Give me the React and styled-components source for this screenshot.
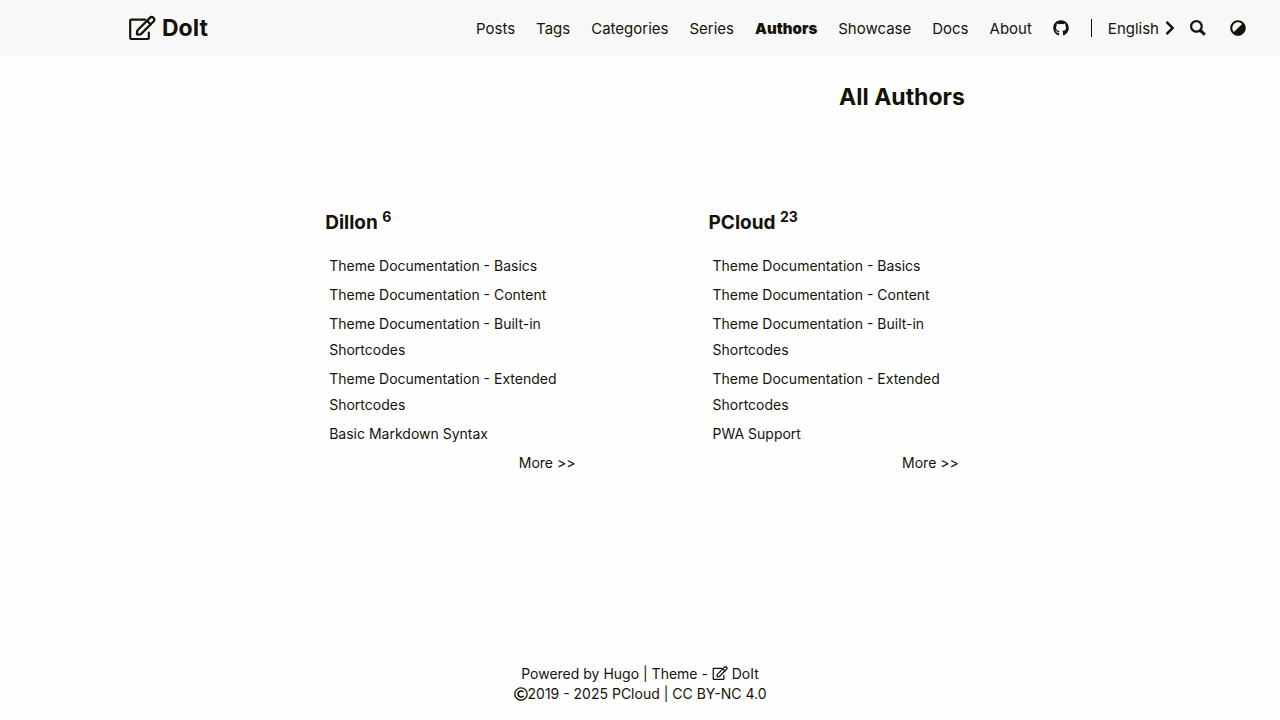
import React from "react";
import styled, { createGlobalStyle } from "styled-components";
import { FaGithub, FaChevronRight, FaAdjust, FaRegCopyright } from "react-icons/fa";

const GlobalStyle = createGlobalStyle`
  * { box-sizing: border-box; }
  body {
    margin: 0;
    background: #fefefe;
    color: #161209;
    font-family: Inter, "Liberation Sans", sans-serif;
    font-size: 15px;
  }
  a { color: inherit; text-decoration: none; }
`;

const Page = styled.div`
  display: flex;
  flex-direction: column;
  min-height: 100vh;
`;

const Header = styled.header`
  display: flex;
  align-items: center;
  justify-content: space-between;
  height: 56px;
  padding: 0 34px 0 10vw;
  background: #f8f8f8;
`;

const Brand = styled.a`
  display: flex;
  align-items: center;
  gap: 6px;
  font-size: 23px;
  font-weight: 700;
`;

const Menu = styled.nav`
  display: flex;
  align-items: center;
`;

const MenuItem = styled.a`
  display: flex;
  margin-right: 21px;
  font-weight: ${(p) => (p.$active ? 900 : 400)};
`;

const IconLink = styled.a`
  display: flex;
  margin-right: 22px;
  font-size: 16px;
`;

const Divider = styled.span`
  width: 1px;
  height: 18px;
  margin-right: 16px;
  background: #161209;
`;

const IconButton = styled.button`
  display: flex;
  align-items: center;
  gap: 3px;
  padding: 0;
  margin-left: ${(p) => p.$gap || 0}px;
  border: 0;
  background: none;
  color: inherit;
  font: inherit;
  cursor: pointer;
`;

const ThemeIcon = styled(FaAdjust)`
  transform: rotate(225deg);
`;

const Main = styled.main`
  flex: 1;
  width: 52%;
  margin: 0 auto;
  padding-top: 24px;
`;

const Title = styled.h1`
  margin: 0 8px 93px;
  font-size: 23px;
  line-height: 34px;
  text-align: right;
`;

const Columns = styled.div`
  display: grid;
  grid-template-columns: 39.5% 39.5%;
  justify-content: space-between;
  padding: 0 14px 0 18px;
`;

const Name = styled.h2`
  margin: 0 0 14px;
  font-size: 19px;
  line-height: 32px;
  sup {
    font-size: 14px;
    line-height: 0;
  }
`;

const List = styled.ul`
  list-style: none;
  margin: 0;
  padding: 0 0 0 4px;
  font-size: 14px;
  line-height: 26px;
`;

const Item = styled.li`
  margin-bottom: 3px;
  text-align: ${(p) => (p.$more ? "right" : "left")};
`;

const Footer = styled.footer`
  padding-bottom: 16px;
  font-size: 14px;
  line-height: 20px;
  text-align: center;
  svg { vertical-align: -2px; }
`;

const EditIcon = ({ size }) => (
  <svg width={size} height={size} viewBox="0 0 28 28" fill="none" stroke="currentColor" strokeWidth="2.2" strokeLinecap="round" strokeLinejoin="round" aria-hidden="true">
    <path d="M17 5.7H3.2a1 1 0 0 0-1 1V24a1 1 0 0 0 1 1H19.8a1 1 0 0 0 1-1V18.5" />
    <path d="M21.9 3.9a2.5 2.5 0 0 1 3.6 3.6L13.4 19.6Q12.8 20.2 12 20.3L9.8 20.6Q8.8 20.6 8.9 19.6L9.1 17.4Q9.2 16.6 9.8 16Z" />
    <path d="M19 6.8l3.6 3.6" />
  </svg>
);

const SearchIcon = () => (
  <svg width="16" height="16" viewBox="0 0 16 16" fill="none" stroke="currentColor" aria-hidden="true">
    <circle cx="6.4" cy="6.4" r="5.3" strokeWidth="2.2" />
    <path d="M10.4 10.4L14.8 14.8" strokeWidth="3" />
  </svg>
);

const menu = ["Posts", "Tags", "Categories", "Series", "Authors", "Showcase", "Docs", "About"];

const shared = [
  "Theme Documentation - Basics",
  "Theme Documentation - Content",
  "Theme Documentation - Built-in Shortcodes",
  "Theme Documentation - Extended Shortcodes",
];

const authors = [
  { name: "Dillon", count: 6, posts: [...shared, "Basic Markdown Syntax"] },
  { name: "PCloud", count: 23, posts: [...shared, "PWA Support"] },
];

export default function App() {
  return (
    <Page>
      <GlobalStyle />
      <Header>
        <Brand href="#"><EditIcon size={28} />DoIt</Brand>
        <Menu>
          {menu.map((m) => (
            <MenuItem key={m} href="#" $active={m === "Authors"}>{m}</MenuItem>
          ))}
          <IconLink href="#" aria-label="GitHub"><FaGithub /></IconLink>
          <Divider />
          <IconButton type="button">English<FaChevronRight size={16} /></IconButton>
          <IconButton type="button" aria-label="Search" $gap={12}><SearchIcon /></IconButton>
          <IconButton type="button" aria-label="Switch theme" $gap={24}><ThemeIcon size={16} /></IconButton>
        </Menu>
      </Header>
      <Main>
        <Title>All Authors</Title>
        <Columns>
          {authors.map((a) => (
            <section key={a.name}>
              <Name><a href="#">{a.name}</a> <sup>{a.count}</sup></Name>
              <List>
                {a.posts.map((p) => (
                  <Item key={p}><a href="#">{p}</a></Item>
                ))}
                <Item $more><a href="#">More &gt;&gt;</a></Item>
              </List>
            </section>
          ))}
        </Columns>
      </Main>
      <Footer>
        <div>Powered by <a href="#">Hugo</a> | Theme - <a href="#"><EditIcon size={16} /> DoIt</a></div>
        <div><FaRegCopyright />2019 - 2025 <a href="#">PCloud</a> | <a href="#">CC BY-NC 4.0</a></div>
      </Footer>
    </Page>
  );
}
